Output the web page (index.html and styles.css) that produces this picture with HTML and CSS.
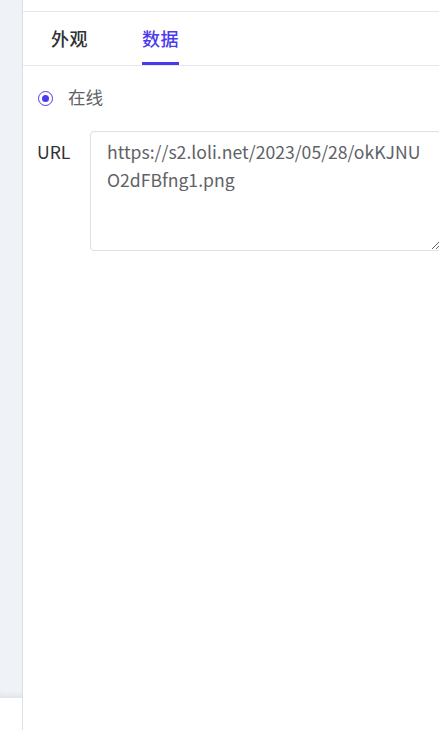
FILE: index.html
```html
<!DOCTYPE html>
<html lang="zh-CN">
<head>
<meta charset="utf-8">
<title>数据</title>
<link rel="stylesheet" href="styles.css">
</head>
<body>
<div class="app">
  <aside class="sidebar">
    <div class="sidebar-top"></div>
    <div class="sidebar-bottom"></div>
  </aside>
  <main class="panel">
    <div class="panel-header"></div>
    <nav class="tabs">
      <div class="tab">外观</div>
      <div class="tab active">数据</div>
    </nav>
    <section class="content">
      <label class="radio">
        <span class="radio-dot"></span>
        <span class="radio-label">在线</span>
      </label>
      <div class="field">
        <span class="field-label">URL</span>
        <textarea class="textarea">https://s2.loli.net/2023/05/28/okKJNUO2dFBfng1.png</textarea>
      </div>
    </section>
  </main>
</div>
</body>
</html>
```
FILE: styles.css
```css
* { box-sizing: border-box; }
html, body {
  margin: 0;
  padding: 0;
  background: #fff;
  font-family: "Noto Sans CJK SC", "Noto Sans", sans-serif;
}
.app {
  display: flex;
  width: 439px;
  height: 730px;
  overflow: hidden;
}
.sidebar {
  width: 23px;
  flex: none;
  display: flex;
  flex-direction: column;
  border-right: 1px solid #dcdfe6;
}
.sidebar-top {
  flex: 1;
  background: #eff2f7;
  box-shadow: inset 0 -6px 6px -4px rgba(0, 0, 0, 0.08);
}
.sidebar-bottom {
  height: 32px;
  background: #fff;
}
.panel {
  flex: 1;
  min-width: 0;
  display: flex;
  flex-direction: column;
}
.panel-header {
  height: 12px;
  border-bottom: 1px solid #e4e7ed;
}
.tabs {
  display: flex;
  gap: 54px;
  padding-left: 28px;
  height: 54px;
  border-bottom: 1px solid #e4e7ed;
}
.tab {
  font-size: 18px;
  font-weight: 500;
  color: #303133;
  line-height: 52px;
  height: 53px;
  position: relative;
  letter-spacing: 0.5px;
}
.tab.active {
  color: #4a3aed;
}
.tab.active::after {
  content: "";
  position: absolute;
  left: 0;
  right: 0;
  bottom: 0;
  height: 3px;
  background: #4a3aed;
}
.content {
  padding: 18px 0 0 15px;
  display: flex;
  flex-direction: column;
  gap: 19px;
}
.radio {
  display: flex;
  align-items: center;
  gap: 15px;
  height: 28px;
}
.radio-dot {
  width: 15px;
  height: 15px;
  border-radius: 50%;
  border: 1.5px solid #4a3aed;
  display: flex;
  align-items: center;
  justify-content: center;
}
.radio-dot::after {
  content: "";
  width: 7px;
  height: 7px;
  border-radius: 50%;
  background: #4a3aed;
}
.radio-label {
  font-size: 17.6px;
  color: #606266;
  line-height: 28px;
  margin-top: -2px;
}
.field {
  display: flex;
  gap: 18px;
  align-items: flex-start;
}
.field-label {
  flex: none;
  font-size: 17.6px;
  color: #303133;
  line-height: 28px;
  padding-top: 7px;
  width: 35px;
  margin-left: -1px;
}
.textarea {
  flex: none;
  width: 351px;
  height: 120px;
  border: 1px solid #dcdfe6;
  border-radius: 4px;
  padding: 6px 16px;
  font-family: "Noto Sans CJK SC", "Noto Sans", sans-serif;
  font-size: 17.6px;
  line-height: 28px;
  color: #606266;
  resize: vertical;
  outline: none;
}
```
